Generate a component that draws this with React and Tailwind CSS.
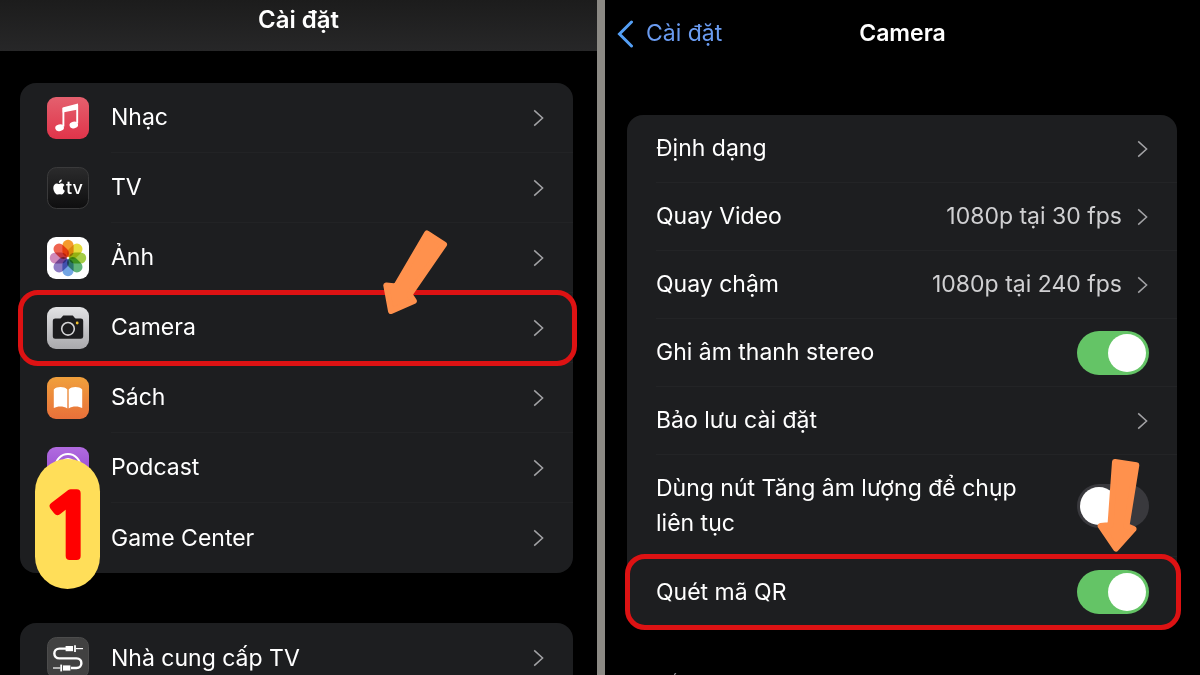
import React from 'react';

function MusicIcon() {
    return (
        <svg viewBox="0 0 42 42" className="w-full h-full" aria-hidden="true">
            <defs>
                <linearGradient id="musicBg" x1="0" y1="0" x2="0" y2="1">
                    <stop offset="0" stopColor="#e4606e" />
                    <stop offset="1" stopColor="#e0344a" />
                </linearGradient>
            </defs>
            <rect width="42" height="42" rx="9" fill="url(#musicBg)" />
            <path d="M15.6 10.4 L31 6.6 V12.6 L15.6 15.6 Z" fill="#fff" />
            <path d="M16.4 11 V29.5 M30.2 8 V26.5" stroke="#fff" strokeWidth="1.9" fill="none" />
            <ellipse cx="12.6" cy="30.8" rx="4.4" ry="3.3" transform="rotate(-14 12.6 30.8)" fill="#fff" />
            <ellipse cx="26.8" cy="28" rx="4.3" ry="3.3" transform="rotate(-14 26.8 28)" fill="#fff" />
        </svg>
    );
}

function TvIcon() {
    return (
        <svg viewBox="0 0 42 42" className="w-full h-full" aria-hidden="true">
            <defs>
                <linearGradient id="tvBg" x1="0" y1="0" x2="0" y2="1">
                    <stop offset="0" stopColor="#2b2b2c" />
                    <stop offset="1" stopColor="#0e0e0f" />
                </linearGradient>
            </defs>
            <rect x="0.5" y="0.5" width="41" height="41" rx="9" fill="url(#tvBg)" stroke="#3a3a3b" />
            <path
                d="M12.6 17 C13.7 16.4 16.2 16.2 17.4 18.2 C15.4 19.4 15.6 22.7 17.9 23.7 C17 26.2 15.6 27.7 14.2 27.5 C13 27 12.2 27 11.1 27.5 C9 28.2 6.3 24 6.3 20.9 C6.3 17.7 8.7 16.1 10.7 16.7 C11.5 17 12 17.2 12.6 17 Z"
                fill="#fff"
            />
            <path d="M11.9 15.9 C11.8 14 13.2 12.8 14.8 12.6 C14.9 14.4 13.6 15.8 11.9 15.9 Z" fill="#fff" />
            <text x="19" y="27" fill="#fff" fontFamily="Inter, sans-serif" fontSize="18" fontWeight="500">tv</text>
        </svg>
    );
}

const petals = [
    { angle: 0, color: '#f59b2d' },
    { angle: 45, color: '#e6dc3c' },
    { angle: 90, color: '#a4cd45' },
    { angle: 135, color: '#60b478' },
    { angle: 180, color: '#74a6e4' },
    { angle: 225, color: '#8f7cc4' },
    { angle: 270, color: '#d08abb' },
    { angle: 315, color: '#ee6450' },
];

function PhotosIcon() {
    return (
        <svg viewBox="0 0 42 42" className="w-full h-full" aria-hidden="true">
            <rect width="42" height="42" rx="9" fill="#fff" />
            <g className="isolate">
                {petals.map((petal) => (
                    <rect
                        key={petal.angle}
                        x="15.4"
                        y="2.8"
                        width="11.2"
                        height="17.2"
                        rx="5.6"
                        fill={petal.color}
                        transform={`rotate(${petal.angle} 21 21)`}
                        className="mix-blend-multiply"
                    />
                ))}
            </g>
        </svg>
    );
}

function CameraIcon() {
    return (
        <svg viewBox="0 0 42 42" className="w-full h-full" aria-hidden="true">
            <defs>
                <linearGradient id="cameraBg" x1="0" y1="0" x2="0" y2="1">
                    <stop offset="0" stopColor="#e2e2e4" />
                    <stop offset="1" stopColor="#a9a9ac" />
                </linearGradient>
            </defs>
            <rect width="42" height="42" rx="9" fill="url(#cameraBg)" />
            <path
                d="M8.2 11.4 H13.2 C14.8 11.4 15 8.6 17 8.6 H25 C27 8.6 27.2 11.4 28.8 11.4 H33.8 Q36.2 11.4 36.2 13.8 V29.4 Q36.2 31.8 33.8 31.8 H8.2 Q5.8 31.8 5.8 29.4 V13.8 Q5.8 11.4 8.2 11.4 Z"
                fill="#1c1c1e"
            />
            <circle cx="21" cy="21.8" r="6.3" fill="none" stroke="#d4d4d6" strokeWidth="1.6" />
            <circle cx="30.2" cy="16" r="1.4" fill="#f2c230" />
        </svg>
    );
}

function BooksIcon() {
    return (
        <svg viewBox="0 0 42 42" className="w-full h-full" aria-hidden="true">
            <defs>
                <linearGradient id="booksBg" x1="0" y1="0" x2="0" y2="1">
                    <stop offset="0" stopColor="#f0a03c" />
                    <stop offset="1" stopColor="#e8703a" />
                </linearGradient>
            </defs>
            <rect width="42" height="42" rx="9" fill="url(#booksBg)" />
            <path d="M20.3 12.4 C17 9.3 10 9.3 6.8 12.4 V31 C10.4 28.8 16.6 28.8 20.3 31.4 Z" fill="#fff" />
            <path d="M21.7 12.4 C25 9.3 32 9.3 35.2 12.4 V31 C31.6 28.8 25.4 28.8 21.7 31.4 Z" fill="#fff" />
        </svg>
    );
}

function PodcastIcon() {
    return (
        <svg viewBox="0 0 42 42" className="w-full h-full" aria-hidden="true">
            <defs>
                <linearGradient id="podcastBg" x1="0" y1="0" x2="0" y2="1">
                    <stop offset="0" stopColor="#b16be0" />
                    <stop offset="1" stopColor="#8b3fc8" />
                </linearGradient>
            </defs>
            <rect width="42" height="42" rx="9" fill="url(#podcastBg)" />
            <circle cx="21" cy="19.5" r="12.4" fill="none" stroke="#fff" strokeWidth="2" />
            <circle cx="21" cy="19.5" r="7.6" fill="none" stroke="#fff" strokeWidth="2" />
            <circle cx="21" cy="19" r="3.6" fill="#fff" />
            <rect x="18" y="24" width="6" height="11" rx="3" fill="#fff" />
        </svg>
    );
}

function GameCenterIcon() {
    return (
        <svg viewBox="0 0 42 42" className="w-full h-full" aria-hidden="true">
            <rect width="42" height="42" rx="9" fill="#fff" />
            <circle cx="16" cy="17" r="8" fill="#f5b83d" />
            <circle cx="27" cy="16" r="6" fill="#e0559b" />
            <circle cx="26" cy="26" r="8" fill="#5fb4ea" />
            <circle cx="15" cy="28" r="5" fill="#7bc75a" />
        </svg>
    );
}

function CableIcon() {
    return (
        <svg viewBox="0 0 42 42" className="w-full h-full" aria-hidden="true">
            <rect x="0.5" y="0.5" width="41" height="41" rx="9" fill="#414141" stroke="#4c4c4c" />
            <path
                d="M19 11.6 H12.5 C5.6 11.6 5.6 21.4 12.5 21.4 H29.5 C36 21.4 36 31 29.5 31 H24"
                fill="none"
                stroke="#fff"
                strokeWidth="2.4"
            />
            <rect x="18.6" y="9" width="7.4" height="5.2" fill="#fff" />
            <path d="M28 8.2 V15" stroke="#fff" strokeWidth="1.8" />
            <path d="M29 11.6 H36" stroke="#fff" strokeWidth="1.2" />
            <rect x="16" y="28.4" width="7.4" height="5.2" fill="#fff" />
            <path d="M14.2 27.6 V34.4" stroke="#fff" strokeWidth="1.8" />
            <path d="M6 31 H13.4" stroke="#fff" strokeWidth="1.2" />
        </svg>
    );
}

function Chevron() {
    return (
        <svg viewBox="0 0 12 18" className="w-3 h-[18px] shrink-0" fill="none" aria-hidden="true">
            <path d="M1.2 1.4 L9.6 9 L1.2 16.6" stroke="#a3a3a6" strokeWidth="1.5" />
        </svg>
    );
}

function Highlight() {
    return (
        <span className="absolute z-10 -inset-y-[3px] -left-[2px] -right-1 rounded-[20px] border-[5px] border-[#dd1213] pointer-events-none" />
    );
}

function AppRow({ icon: Icon, label, highlighted, children }) {
    return (
        <li className="group relative">
            <a href="#" className="flex items-center gap-[22px] h-[70px] pl-[27px]">
                <span className="w-[42px] h-[42px] shrink-0">
                    <Icon />
                </span>
                <span className="flex flex-1 items-center justify-between h-full pr-7 border-b border-[#222325] group-last:border-b-0">
                    {label}
                    <Chevron />
                </span>
            </a>
            {highlighted && <Highlight />}
            {children}
        </li>
    );
}

function LinkRow({ label, value }) {
    return (
        <li className="pl-[29px]">
            <a href="#" className="flex items-center h-[68px] pr-7 border-b border-[#232426]">
                <span className="flex-1">{label}</span>
                {value && <span className="mr-[15px] text-[#d0d0d2]">{value}</span>}
                <Chevron />
            </a>
        </li>
    );
}

function SwitchRow({ id, label, on, highlighted, size = 'h-[68px]', children }) {
    return (
        <li className="group relative pl-[29px]">
            <div className={`flex items-center justify-between pr-7 border-b border-[#232426] group-last:border-b-0 ${size}`}>
                <label htmlFor={id} className="max-w-[380px]">{label}</label>
                <input
                    id={id}
                    type="checkbox"
                    role="switch"
                    defaultChecked={on}
                    className="appearance-none shrink-0 w-[72px] h-11 p-[3px] rounded-full bg-[#39393d] checked:bg-[#64c466] before:block before:content-[''] before:w-[38px] before:h-[38px] before:rounded-full before:bg-white checked:before:ml-7"
                />
            </div>
            {highlighted && <Highlight />}
            {children}
        </li>
    );
}

export default function App() {
    return (
        <div className="flex h-screen overflow-hidden bg-black text-white text-[23px] leading-[35px] font-['Inter',sans-serif]">
            <section className="w-[49.75%]">
                <header className="flex justify-center h-[51px] bg-linear-to-b from-[#1c1c1c] to-[#272728]">
                    <h1 className="text-2xl leading-10 font-semibold">Cài đặt</h1>
                </header>
                <div className="pt-8 pl-5 pr-6">
                    <div className="relative">
                        <ul className="rounded-2xl bg-[#1d1e20]">
                            <AppRow icon={MusicIcon} label="Nhạc" />
                            <AppRow icon={TvIcon} label="TV" />
                            <AppRow icon={PhotosIcon} label="Ảnh" />
                            <AppRow icon={CameraIcon} label="Camera" highlighted>
                                <svg
                                    viewBox="383 230 65 85"
                                    className="absolute z-20 -top-[63px] right-[125px] w-[65px] h-[85px]"
                                    aria-hidden="true"
                                >
                                    <path
                                        d="M427 233.5 L444 244.5 L409.5 294.5 L413.8 301 L391 311 L386.3 285.5 L396 286.5 Z"
                                        fill="#ff914d"
                                        stroke="#ff914d"
                                        strokeWidth="6"
                                        strokeLinejoin="round"
                                    />
                                </svg>
                            </AppRow>
                            <AppRow icon={BooksIcon} label="Sách" />
                            <AppRow icon={PodcastIcon} label="Podcast" />
                            <AppRow icon={GameCenterIcon} label="Game Center" />
                        </ul>
                        <div className="absolute z-20 left-[15px] -bottom-4 w-[65px] h-[130px] rounded-full bg-[#ffde59]">
                            <svg viewBox="0 0 65 130" className="w-full h-full">
                                <text
                                    x="36"
                                    y="97"
                                    textAnchor="middle"
                                    fontFamily="'Open Sans', sans-serif"
                                    fontSize="88"
                                    fontWeight="500"
                                    fill="#ff0000"
                                    stroke="#ff0000"
                                    strokeWidth="8"
                                    strokeLinejoin="round"
                                >
                                    1
                                </text>
                            </svg>
                        </div>
                    </div>
                    <ul className="mt-[50px] rounded-2xl bg-[#1d1e20]">
                        <AppRow icon={CableIcon} label="Nhà cung cấp TV" />
                    </ul>
                </div>
            </section>

            <div className="w-2 bg-[#8b8984]" />

            <section className="flex-1">
                <header className="grid grid-cols-3 items-center h-[67px] pl-3">
                    <a href="#" className="flex items-center gap-3 text-[#6a9bf0]">
                        <svg viewBox="0 0 17 28" className="w-[17px] h-7" fill="none" aria-hidden="true">
                            <path d="M14.5 2 L2.5 14 L14.5 26" stroke="#549ff5" strokeWidth="3" strokeLinecap="round" />
                        </svg>
                        Cài đặt
                    </a>
                    <h2 className="pr-3 text-center font-semibold">Camera</h2>
                </header>
                <div className="pt-12 pl-[22px] pr-[23px]">
                    <ul className="rounded-2xl bg-[#1d1e20]">
                        <LinkRow label="Định dạng" />
                        <LinkRow label="Quay Video" value="1080p tại 30 fps" />
                        <LinkRow label="Quay chậm" value="1080p tại 240 fps" />
                        <SwitchRow id="stereo" label="Ghi âm thanh stereo" on />
                        <LinkRow label="Bảo lưu cài đặt" />
                        <SwitchRow
                            id="burst"
                            label="Dùng nút Tăng âm lượng để chụp liên tục"
                            size="h-[102px]"
                        >
                            <svg
                                viewBox="1097 459 43 93"
                                className="absolute z-20 top-1 right-[37px] w-[43px] h-[93px]"
                                aria-hidden="true"
                            >
                                <path
                                    d="M1115 462 L1136.3 465.3 L1126.5 526 L1133.5 529 L1116 548.5 L1100.7 526 L1110.5 525 Z"
                                    fill="#ff914d"
                                    stroke="#ff914d"
                                    strokeWidth="6"
                                    strokeLinejoin="round"
                                />
                            </svg>
                        </SwitchRow>
                        <SwitchRow id="qr" label="Quét mã QR" on highlighted size="h-[70px]" />
                    </ul>
                    <h3 className="mt-[46px] pl-[29px] text-base leading-6 text-[#8e8e93]">BỐ CỤC</h3>
                </div>
            </section>
        </div>
    );
}
